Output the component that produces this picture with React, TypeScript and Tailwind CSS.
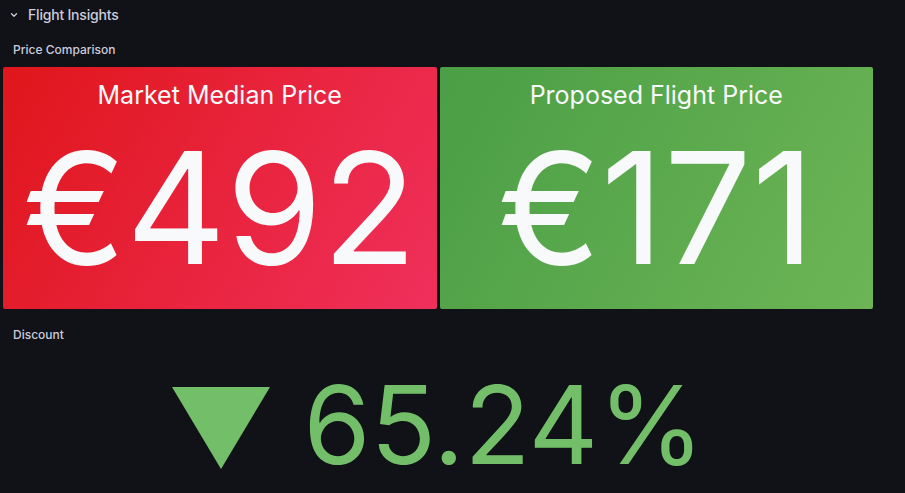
import React from "react";

const font = { fontFamily: "Inter, 'Noto Sans', sans-serif" };

function StatCard({ title, value, gradient }: { title: string; value: string; gradient: string }) {
  return (
    <div className={`flex h-[242px] flex-col items-center rounded-[2px] pt-[16px] text-[#f8f9fa] ${gradient}`}>
      <div className="text-[25px] leading-none">{title}</div>
      <div className="mt-[22px] text-[155px] leading-none">{value}</div>
    </div>
  );
}

export default function App() {
  return (
    <div className="min-h-[493px] w-full overflow-hidden bg-[#111217] text-[#ccccdc]" style={font}>
      {/* Row header */}
      <div className="flex h-[28px] items-center gap-[10px] pl-[10px]">
        <svg width="8" height="8" viewBox="0 0 8 8" className="mt-[1px]">
          <path d="M1.5 2.8 L4 5.2 L6.5 2.8" fill="none" stroke="#ccccdc" strokeWidth="1.3" strokeLinecap="round" strokeLinejoin="round" />
        </svg>
        <span className="text-[14px] font-medium tracking-[-0.2px]">Flight Insights</span>
      </div>

      {/* Price comparison panel */}
      <div className="flex h-[39px] items-center px-[13px] pt-[4px] text-[12px] font-medium">Price Comparison</div>
      <div className="ml-[3px] grid w-[870px] grid-cols-2 gap-[3px]">
        <StatCard
          title="Market Median Price"
          value="€492"
          gradient="bg-[linear-gradient(120deg,#e0161b,#f0305c)]"
        />
        <StatCard
          title="Proposed Flight Price"
          value="€171"
          gradient="bg-[linear-gradient(120deg,#4a9e45,#6db556)]"
        />
      </div>

      {/* Discount panel */}
      <div className="flex h-[52px] items-center px-[13px] text-[12px] font-medium">Discount</div>
      <div className="ml-[3px] flex w-[870px] items-start justify-center gap-[34px] pt-[10px] text-[#73bf69]">
        <svg width="98" height="82" viewBox="0 0 98 82" className="mt-[16px] shrink-0">
          <polygon points="0,0 98,0 49,82" fill="#73bf69" />
        </svg>
        <div className="text-[108px] leading-none">65.24%</div>
      </div>
    </div>
  );
}
